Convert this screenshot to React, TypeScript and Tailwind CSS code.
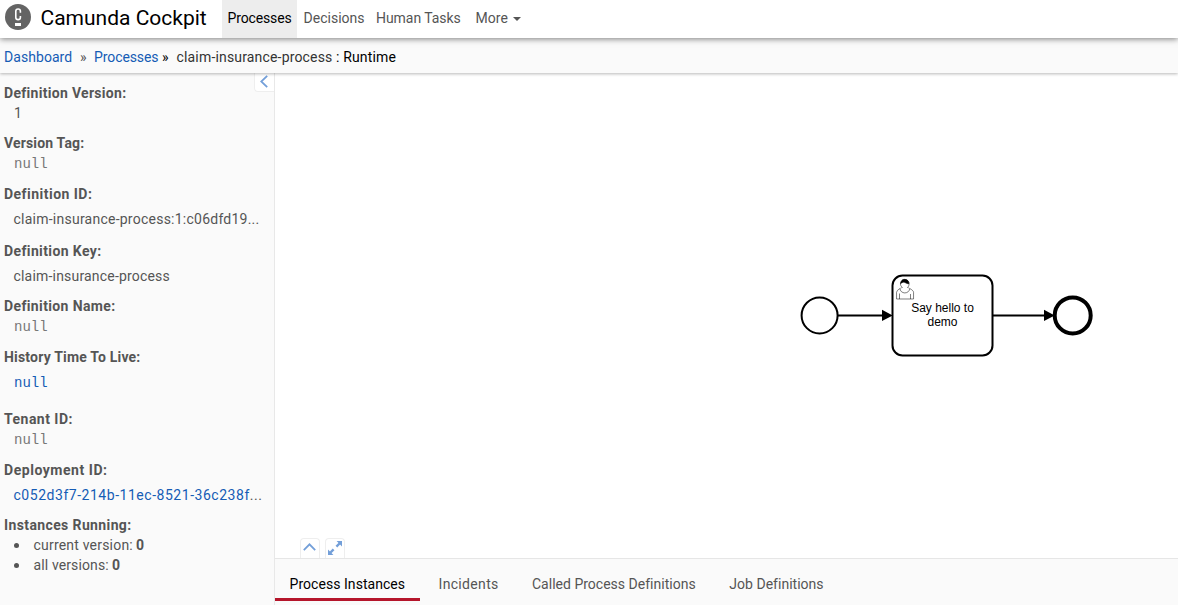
import type { ReactNode } from "react";

function Field({ label, className, children }: { label: ReactNode; className: string; children: ReactNode }) {
  return (
    <div className={className}>
      <dt className="h-5 pl-1 font-bold whitespace-nowrap">{label}</dt>
      {children}
    </div>
  );
}

function NullValue() {
  return <dd className="h-5 pt-px pl-3.5 font-['Liberation_Mono',monospace] text-[#777]">null</dd>;
}

function Logo() {
  return (
    <svg className="h-[26px] w-[26px] shrink-0" viewBox="0 0 26 26">
      <circle cx="13" cy="13" r="13" fill="#646464" />
      <path d="M15.4 8.8V7.2Q15.4 5 13.1 5Q10.8 5 10.8 7.2V13.4Q10.8 15.6 13.1 15.6Q15.4 15.6 15.4 13.4V11.9" fill="none" stroke="#fff" strokeWidth="1.6" />
      <rect x="10" y="19" width="6" height="3" fill="#fff" />
    </svg>
  );
}

function Diagram() {
  return (
    <svg className="block h-[485px] w-[903px]" viewBox="275 73 903 485">
      <g fill="none" stroke="#000" strokeWidth="2">
        <circle cx="819.6" cy="315.4" r="18" />
        <path d="M837.7 315.4H884M992.5 315.4H1046" />
        <rect x="892.5" y="275.5" width="100" height="80" rx="10" />
        <circle cx="1072.7" cy="315.4" r="18" strokeWidth="4" />
      </g>
      <path d="M882 309.8L892.7 315.4L882 321ZM1044 309.8L1054.7 315.4L1044 321Z" />
      <g transform="translate(907.5 287.5)" stroke="#000" strokeWidth="0.5" fill="#fff">
        <path d="m0,0c0.909,-0.845 1.594,-2.049 1.594,-3.385 0,-2.554 -1.805,-4.622 -4.357,-4.622 -2.552,0 -4.288,2.068 -4.288,4.622 0,1.348 0.974,2.562 1.896,3.405 -0.529,0.187 -5.669,2.097 -5.794,4.756v6.718h17v-6.718c0,-2.298 -5.528,-4.595 -6.051,-4.776zm-8,6l0,5.5m11,0l0,-5" />
        <path d="m2.162,1.009c0,2.447 -2.158,4.431 -4.821,4.431 -2.665,0 -4.822,-1.981 -4.822,-4.431" />
        <path fill="#000" d="m-6.9,-3.8c0,0 2.251,-2.358 4.274,-1.177 2.024,1.181 4.221,1.537 4.124,0.965 -0.098,-0.57 -0.117,-3.791 -4.191,-4.136 -3.572,-0.316 -4.208,3.836 -4.208,4.348z" />
      </g>
      <g className="font-['Liberation_Sans',Arial,sans-serif] text-[12px]" textAnchor="middle">
        <text x="942.5" y="312">Say hello to</text>
        <text x="942.5" y="326.4">demo</text>
      </g>
    </svg>
  );
}

export default function App() {
  return (
    <div className="flex h-[605px] w-[1178px] flex-col overflow-hidden bg-white font-[Roboto,sans-serif] text-[14px] leading-5 text-[#555]">
      <header className="relative z-20 flex h-[38px] shrink-0 bg-white shadow-[0_1px_6px_rgba(0,0,0,0.5)]">
        <div className="flex w-[222px] items-center pb-1 pl-[5px]">
          <Logo />
          <span className="ml-[9.5px] pt-0.5 text-[21px] leading-7 whitespace-nowrap text-black">Camunda Cockpit</span>
        </div>
        <nav className="flex items-center whitespace-nowrap">
          <a className="flex h-full w-[75px] items-center bg-[#ededed] pb-0.5 pl-[5.5px] tracking-[-0.13px] text-black">Processes</a>
          <a className="w-[72px] pb-0.5 pl-[6.5px] tracking-[0.02px]">Decisions</a>
          <a className="w-[100px] pb-0.5 pl-[7px] tracking-[-0.05px]">Human Tasks</a>
          <a className="flex items-center pb-0.5 pl-[6.5px] tracking-[0.06px]">
            More
            <span className="mt-[2px] ml-[5px] border-x-4 border-t-4 border-x-transparent border-t-[#555]" />
          </a>
        </nav>
      </header>

      <div className="relative z-10 flex h-[35px] shrink-0 items-center bg-[#fafafa] pt-0.5 pl-[4px] whitespace-nowrap text-black shadow-[0_1px_3px_rgba(0,0,0,0.28)]">
        <a className="w-[76px] tracking-[0.06px] text-[#155cb5]">Dashboard</a>
        <span className="w-[14px] text-[#555]">»</span>
        <a className="w-[68px] tracking-[-0.09px] text-[#155cb5]">Processes</a>
        <span className="w-[14.5px]">»</span>
        <span className="w-[159.5px] tracking-[0.17px] text-[#333]">claim-insurance-process</span>
        <span className="tracking-[0.15px]">: Runtime</span>
      </div>

      <div className="flex min-h-0 flex-1">
        <aside className="relative w-[275px] shrink-0 border-r border-[#e8e8e8] bg-[#fafafa] pt-[10px]">
          <div className="absolute top-0 right-0 flex h-[19px] w-5 items-center justify-center rounded-bl border-b border-l border-[#eee] bg-white pr-0.5 pb-px">
            <svg className="h-[13px] w-2" viewBox="0 0 8 13" fill="none" stroke="#739fd9" strokeWidth="1.8">
              <path d="M7.2 0.8L1.2 6.5L7.2 12.2" />
            </svg>
          </div>
          <dl className="whitespace-nowrap">
            <Field className="mb-[10px]" label={<span className="tracking-[0.3px]">Definition Version:</span>}>
              <dd className="h-5 pl-3.5">1</dd>
            </Field>
            <Field className="mb-[11px]" label={<span className="tracking-[0.16px]">Version Tag:</span>}>
              <NullValue />
            </Field>
            <Field className="mb-[7px]" label={<span className="tracking-[0.47px]">Definition ID:</span>}>
              <dd className="h-[30px] pt-[5px] pl-[13.5px] tracking-[0.24px]">claim-insurance-process:1:c06dfd19...</dd>
            </Field>
            <Field className="mb-[5px]" label={<span className="tracking-[0.38px]">Definition Key:</span>}>
              <dd className="h-[30px] pt-[5px] pl-[13.5px] tracking-[0.19px]">claim-insurance-process</dd>
            </Field>
            <Field className="mb-[11px]" label={<span className="tracking-[0.37px]">Definition Name:</span>}>
              <NullValue />
            </Field>
            <Field className="mb-[12px]" label={<span className="tracking-[0.19px]">History Time To Live:</span>}>
              <dd className="h-[30px] pt-[6px] pl-3.5 font-['Liberation_Mono',monospace] text-[#155cb5]">null</dd>
            </Field>
            <Field className="mb-[11px]" label={<span className="tracking-[0.48px]">Tenant ID:</span>}>
              <NullValue />
            </Field>
            <Field className="mb-[5px]" label={<span className="tracking-[0.54px]">Deployment ID:</span>}>
              <dd className="h-[30px] pt-[5px] pl-[13.5px] tracking-[0.53px]">
                <a className="text-[#155cb5]">c052d3f7-214b-11ec-8521-36c238f</a>...
              </dd>
            </Field>
            <Field className="" label={<span className="tracking-[0.38px]">Instances Running:</span>}>
              <dd>
                <ul className="pl-[14px]">
                  <li className="flex h-5 items-center">
                    <span className="mr-[14.5px] h-[5px] w-[5px] rounded-full bg-[#555]" />
                    <span className="w-[102.5px] tracking-[0.2px]">current version:</span>
                    <b>0</b>
                  </li>
                  <li className="flex h-5 items-center">
                    <span className="mr-[14.5px] h-[5px] w-[5px] rounded-full bg-[#555]" />
                    <span className="w-[78.5px] tracking-[0.12px]">all versions:</span>
                    <b>0</b>
                  </li>
                </ul>
              </dd>
            </Field>
          </dl>
        </aside>

        <main className="flex min-w-0 flex-1 flex-col">
          <div className="relative h-[485px] shrink-0">
            <Diagram />
            <div className="absolute bottom-0 left-[25px] flex gap-[5px]">
              <div className="flex h-5 w-5 items-center justify-center rounded-t border-x border-t border-[#eee] bg-white pr-px pb-[3px]">
                <svg className="h-2 w-[13px]" viewBox="0 0 13 8" fill="none" stroke="#739fd9" strokeWidth="1.8">
                  <path d="M0.8 7.2L6.5 1.4L12.2 7.2" />
                </svg>
              </div>
              <div className="flex h-5 w-5 items-center justify-center rounded-t border-x border-t border-[#eee] bg-white pb-0.5">
                <svg className="h-[14px] w-[14px]" viewBox="0 0 14 14" fill="#739fd9" stroke="#739fd9">
                  <path d="M8.6 0H14V5.4ZM0 8.6V14H5.4Z" stroke="none" />
                  <path d="M8.4 5.6L12 2M5.6 8.4L2 12" strokeWidth="2.4" />
                </svg>
              </div>
            </div>
          </div>
          <div className="flex flex-1 border-t border-[#e6e6e6] bg-[#fafafa] whitespace-nowrap">
            <a className="h-[42px] w-[145px] border-b-[3px] border-[#b5152b] pt-[15px] pl-[14.5px] tracking-[0.05px] text-black">Process Instances</a>
            <a className="w-[94px] pt-[15px] pl-[18.5px] tracking-[0.33px]">Incidents</a>
            <a className="w-[197px] pt-[15px] pl-[18px] tracking-[0.01px]">Called Process Definitions</a>
            <a className="pt-[15px] pl-[18.3px] tracking-[0.02px]">Job Definitions</a>
          </div>
        </main>
      </div>
    </div>
  );
}
